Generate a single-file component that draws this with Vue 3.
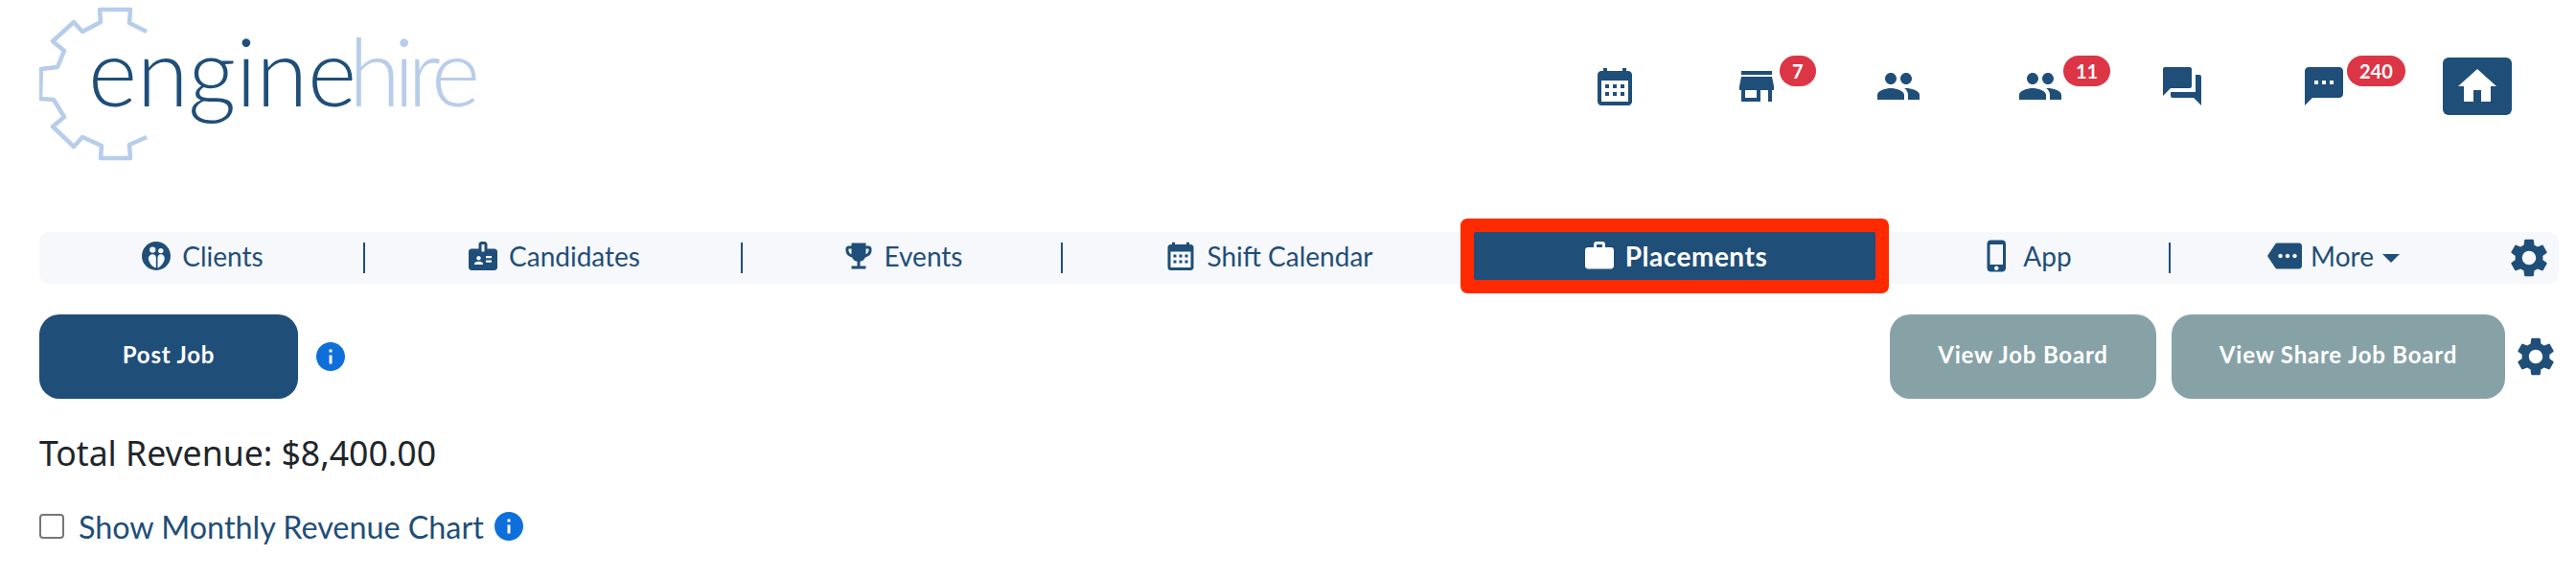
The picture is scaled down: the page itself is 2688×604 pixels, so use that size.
<template>
  <div class="page">
    <header class="top">
      <svg class="logo" width="470" height="180" viewBox="41 0 470 180">
        <polyline class="logo__gear" points="153,33 135,24 136,10 104,10 105,23 86,33 77,23 55,43 67,53 60,70 43,72 42,103 56,104 67,122 55,132 77,153 86,143 106,152 105,165 136,165 135,151 153,143" />
        <text class="logo__text logo__text--dark" x="92" y="111" textLength="280" lengthAdjust="spacing">engine</text>
        <text class="logo__text logo__text--light" x="364" y="111" textLength="137" lengthAdjust="spacing">hire</text>
      </svg>
      <div class="top__actions">
        <a v-for="item in topIcons" :key="item.name" class="top__cell">
          <span class="top__icon">
            <svg width="48" height="48" viewBox="0 0 24 24" class="icon"><path :d="item.path" /></svg>
            <span v-if="item.count" class="badge">{{ item.count }}</span>
          </span>
        </a>
        <a class="top__home">
          <svg width="48" height="48" viewBox="0 0 24 24" fill="#fff"><path :d="icons.home" /></svg>
        </a>
      </div>
    </header>

    <nav class="tabs">
      <template v-for="(tab, i) in tabs" :key="tab.label">
        <a class="tab" :class="[`tab--${tab.key}`, { 'tab--active': tab.active }]">
          <svg width="36" height="36" viewBox="0 0 24 24" class="tab__icon"><path :d="tab.path" fill-rule="evenodd" /></svg>
          <span>{{ tab.label }}</span>
          <span v-if="tab.caret" class="tab__caret"></span>
        </a>
        <span v-if="tab.divider" class="tabs__divider"></span>
      </template>
      <svg width="48" height="48" viewBox="0 0 24 24" class="icon tabs__gear"><path :d="icons.gear" /></svg>
    </nav>

    <div class="toolbar">
      <div class="toolbar__side">
        <button class="btn btn--primary">Post Job</button>
        <svg width="36" height="36" viewBox="0 0 24 24" class="info toolbar__info"><path :d="icons.info" /></svg>
      </div>
      <div class="toolbar__side">
        <button class="btn btn--muted btn--board">View Job Board</button>
        <button class="btn btn--muted btn--share">View Share Job Board</button>
        <svg width="48" height="48" viewBox="0 0 24 24" class="icon toolbar__gear"><path :d="icons.gear" /></svg>
      </div>
    </div>

    <h3 class="revenue">Total Revenue: $8,400.00</h3>

    <label class="chart-toggle">
      <input type="checkbox" class="chart-toggle__box" />
      <span class="chart-toggle__label">Show Monthly Revenue Chart</span>
      <svg width="36" height="36" viewBox="0 0 24 24" class="info"><path :d="icons.info" /></svg>
    </label>
  </div>
</template>

<script setup>
const icons = {
  calendar: 'M19 4h-1V2.5h-2V4H8V2.5H6V4H5c-1.1 0-2 .9-2 2v14c0 1.1.9 2 2 2h14c1.1 0 2-.9 2-2V6c0-1.1-.9-2-2-2zm0 16H5V9h14v11zM7 11h2v2H7zm4 0h2v2h-2zm4 0h2v2h-2zM7 15h2v2H7zm4 0h2v2h-2zm4 0h2v2h-2z',
  store: 'M20 4H4v2h16V4zm1 10v-2l-1-5H4l-1 5v2h1v6h10v-6h4v6h2v-6h1zm-9 4H6v-4h6v4z',
  people: 'M16 11c1.66 0 2.99-1.34 2.99-3S17.66 5 16 5c-1.66 0-3 1.34-3 3s1.34 3 3 3zm-8 0c1.66 0 2.99-1.34 2.99-3S9.66 5 8 5C6.34 5 5 6.34 5 8s1.34 3 3 3zm0 2c-2.33 0-7 1.17-7 3.5V19h14v-2.5c0-2.33-4.67-3.5-7-3.5zm8 0c-.29 0-.62.02-.97.05 1.16.84 1.97 1.97 1.97 3.45V19h6v-2.5c0-2.33-4.67-3.5-7-3.5z',
  forum: 'M21 6h-2v9H6v2c0 .55.45 1 1 1h11l4 4V7c0-.55-.45-1-1-1zm-4 6V3c0-.55-.45-1-1-1H3c-.55 0-1 .45-1 1v14l4-4h10c.55 0 1-.45 1-1z',
  sms: 'M20 2H4c-1.1 0-1.99.9-1.99 2L2 22l4-4h14c1.1 0 2-.9 2-2V4c0-1.1-.9-2-2-2zM9 11H7V9h2v2zm4 0h-2V9h2v2zm4 0h-2V9h2v2z',
  home: 'M10 20v-6h4v6h5v-8h3L12 3 2 12h3v8z',
  gear: 'M19.14 12.94c.04-.3.06-.61.06-.94 0-.32-.02-.64-.07-.94l2.03-1.58c.18-.14.23-.41.12-.61l-1.92-3.32c-.12-.22-.37-.29-.59-.22l-2.39.96c-.5-.38-1.03-.7-1.62-.94l-.36-2.54c-.04-.24-.24-.41-.48-.41h-3.84c-.24 0-.43.17-.47.41l-.36 2.54c-.59.24-1.13.57-1.62.94l-2.39-.96c-.22-.08-.47 0-.59.22L2.74 8.87c-.12.21-.08.47.12.61l2.03 1.58c-.05.3-.09.63-.09.94s.02.64.07.94l-2.03 1.58c-.18.14-.23.41-.12.61l1.92 3.32c.12.22.37.29.59.22l2.39-.96c.5.38 1.03.7 1.62.94l.36 2.54c.05.24.24.41.48.41h3.84c.24 0 .44-.17.47-.41l.36-2.54c.59-.24 1.13-.56 1.62-.94l2.39.96c.22.08.47 0 .59-.22l1.92-3.32c.12-.22.07-.47-.12-.61l-2.01-1.58zM12 15.6c-1.98 0-3.6-1.62-3.6-3.6s1.62-3.6 3.6-3.6 3.6 1.62 3.6 3.6-1.62 3.6-3.6 3.6z',
  info: 'M12 2C6.48 2 2 6.48 2 12s4.48 10 10 10 10-4.48 10-10S17.52 2 12 2zm1 15h-2v-6h2v6zm0-8h-2V7h2v2z',
  clients: 'M12 2a10 10 0 1 0 0 20 10 10 0 0 0 0-20zM9.5 5.6a2.1 2.1 0 1 1 0 4.2 2.1 2.1 0 0 1 0-4.2zm5.7 1a1.8 1.8 0 1 1 0 3.6 1.8 1.8 0 0 1 0-3.6zM6.5 13.5c.3-1.5 1.5-2.7 3-2.7s2.4.9 2.4 2.7v6.7c-2.6-.5-4.8-3-5.4-6.7zm6.5-.3c0-1.3.8-2.4 2.3-2.4s2.4 1 2.6 3c-.6 3-2.5 5.7-4.9 6.5z',
  badge: 'M20 7h-5V4c0-1.1-.9-2-2-2h-2c-1.1 0-2 .9-2 2v3H4c-1.1 0-2 .9-2 2v11c0 1.1.9 2 2 2h16c1.1 0 2-.9 2-2V9c0-1.1-.9-2-2-2zM9 12c.83 0 1.5.67 1.5 1.5S9.83 15 9 15s-1.5-.67-1.5-1.5S8.17 12 9 12zm3 6H6v-.75c0-1 2-1.5 3-1.5s3 .5 3 1.5V18zm1-9h-2V4h2v5zm5 7.5h-4V15h4v1.5zm0-3h-4V12h4v1.5z',
  trophy: 'M19 5h-2V3H7v2H5c-1.1 0-2 .9-2 2v1c0 2.55 1.92 4.63 4.39 4.94.63 1.5 1.98 2.63 3.61 2.96V19H7v2h10v-2h-4v-3.1c1.63-.33 2.98-1.46 3.61-2.96C19.08 12.63 21 10.55 21 8V7c0-1.1-.9-2-2-2zM5 8V7h2v3.82C5.84 10.4 5 9.3 5 8zm14 0c0 1.3-.84 2.4-2 2.82V7h2v1z',
  work: 'M20 6h-4V4c0-1.11-.89-2-2-2h-4c-1.11 0-2 .89-2 2v2H4c-1.11 0-1.99.89-1.99 2L2 19c0 1.11.89 2 2 2h16c1.11 0 2-.89 2-2V8c0-1.11-.89-2-2-2zm-6 0h-4V4h4v2z',
  phone: 'M15.5 1h-8C6.12 1 5 2.12 5 3.5v17C5 21.88 6.12 23 7.5 23h8c1.38 0 2.5-1.12 2.5-2.5v-17C18 2.12 16.88 1 15.5 1zm-4 21c-.83 0-1.5-.67-1.5-1.5s.67-1.5 1.5-1.5 1.5.67 1.5 1.5-.67 1.5-1.5 1.5zm4.5-4H7V4h9v14z',
  more: 'M22 3H7c-.69 0-1.23.35-1.59.88L0 12l5.41 8.11c.36.53.9.89 1.59.89h15c1.1 0 2-.9 2-2V5c0-1.1-.9-2-2-2zM9 13.5c-.83 0-1.5-.67-1.5-1.5s.67-1.5 1.5-1.5 1.5.67 1.5 1.5-.67 1.5-1.5 1.5zm5 0c-.83 0-1.5-.67-1.5-1.5s.67-1.5 1.5-1.5 1.5.67 1.5 1.5-.67 1.5-1.5 1.5zm5 0c-.83 0-1.5-.67-1.5-1.5s.67-1.5 1.5-1.5 1.5.67 1.5 1.5-.67 1.5-1.5 1.5z',
}

const topIcons = [
  { name: 'calendar', path: icons.calendar },
  { name: 'store', path: icons.store, count: 7 },
  { name: 'people', path: icons.people },
  { name: 'applicants', path: icons.people, count: 11 },
  { name: 'forum', path: icons.forum },
  { name: 'sms', path: icons.sms, count: 240 },
]

const tabs = [
  { key: 'clients', label: 'Clients', path: icons.clients, divider: true },
  { key: 'candidates', label: 'Candidates', path: icons.badge, divider: true },
  { key: 'events', label: 'Events', path: icons.trophy, divider: true },
  { key: 'shift', label: 'Shift Calendar', path: icons.calendar },
  { key: 'placements', label: 'Placements', path: icons.work, active: true },
  { key: 'app', label: 'App', path: icons.phone, divider: true },
  { key: 'more', label: 'More', path: icons.more, caret: true },
]
</script>

<style>
body {
  background: #fff;
}
</style>

<style scoped>
.page {
  padding: 0 18px 0 41px;
  font-family: Lato, "Open Sans", sans-serif;
  color: #1f4e79;
  overflow: hidden;
  height: 604px;
  box-sizing: border-box;
}

.icon {
  fill: #1f4e79;
}

.info {
  fill: #0e6fdb;
  flex-shrink: 0;
}

.top {
  display: flex;
  justify-content: space-between;
  height: 242px;
  padding-right: 49px;
}

.logo {
  display: block;
}

.logo__gear {
  fill: none;
  stroke: #b7cdeb;
  stroke-width: 4.5;
  stroke-linejoin: round;
}

.logo__text {
  font-family: Lato, sans-serif;
  font-size: 98px;
  font-weight: 300;
}

.logo__text--dark {
  fill: #1f4e79;
}

.logo__text--light {
  fill: #b7cdeb;
}

.top__actions {
  display: flex;
  align-items: center;
  height: 60px;
  margin-top: 60px;
}

.top__cell {
  width: 148px;
  display: flex;
  justify-content: center;
}

.top__icon {
  position: relative;
  display: block;
  width: 48px;
  height: 48px;
}

.top__icon svg {
  display: block;
}

.badge {
  position: absolute;
  left: 100%;
  top: -8px;
  height: 32px;
  line-height: 32px;
  padding: 0 13px;
  border-radius: 16px;
  background: #dc3545;
  color: #fff;
  font-size: 20px;
  font-weight: 700;
}

.top__home {
  width: 72px;
  height: 60px;
  margin-left: 50px;
  border-radius: 6px;
  background: #1f4e79;
  display: flex;
  align-items: center;
  justify-content: center;
}

.tabs {
  display: flex;
  align-items: flex-start;
  height: 54px;
  border-radius: 10px;
  background: #f6f8fb;
}

.tab {
  height: 50px;
  display: flex;
  align-items: center;
  justify-content: center;
  gap: 9px;
  font-size: 28px;
  color: #1f4e79;
  flex-shrink: 0;
}

.tab__icon {
  fill: currentColor;
}

.tab--clients { width: 338px; }
.tab--candidates { width: 392px; }
.tab--events { width: 332px; }
.tab--shift { width: 429px; }
.tab--placements { width: 419px; }
.tab--app { width: 306px; padding-left: 8px; box-sizing: border-box; }
.tab--more { width: 340px; }

.tab--active {
  background: #1f4e79;
  color: #fff;
  font-weight: 700;
  letter-spacing: 0.5px;
  box-shadow: 0 0 0 14px #ff2a00;
  border-radius: 2px;
  position: relative;
}

.tab__caret {
  width: 0;
  height: 0;
  margin-top: 4px;
  border-left: 9px solid transparent;
  border-right: 9px solid transparent;
  border-top: 9px solid #1f4e79;
}

.tabs__divider {
  width: 2px;
  height: 32px;
  margin-top: 11px;
  background: #1f4e79;
  flex-shrink: 0;
}

.tabs__gear {
  margin: 3px 0 0 10px;
  flex-shrink: 0;
}

.toolbar {
  display: flex;
  justify-content: space-between;
  margin-top: 32px;
}

.toolbar__side {
  display: flex;
  align-items: center;
}

.btn {
  height: 88px;
  padding: 0 0 5px;
  border: 0;
  border-radius: 21px;
  color: #fff;
  font-family: Lato, sans-serif;
  font-size: 24px;
  font-weight: 700;
  letter-spacing: 0.8px;
}

.btn--primary {
  width: 270px;
  background: #1f4e79;
}

.toolbar__info {
  margin-left: 16px;
}

.btn--muted {
  background: #87a2a7;
}

.btn--board {
  width: 278px;
}

.btn--share {
  width: 348px;
  margin-left: 16px;
}

.toolbar__gear {
  margin-left: 8px;
}

.revenue {
  margin: 33px 0 0;
  height: 46px;
  line-height: 46px;
  font-family: "Noto Sans", sans-serif;
  font-size: 35.6px;
  font-weight: 400;
  color: #212529;
}

.chart-toggle {
  display: flex;
  align-items: center;
  margin-top: 36px;
  height: 36px;
}

.chart-toggle__box {
  appearance: none;
  width: 26px;
  height: 26px;
  margin: 0 15px 0 0;
  border: 2px solid #767676;
  border-radius: 4px;
  background: #fff;
  box-sizing: border-box;
}

.chart-toggle__label {
  font-size: 32.3px;
  margin-right: 8px;
}
</style>
